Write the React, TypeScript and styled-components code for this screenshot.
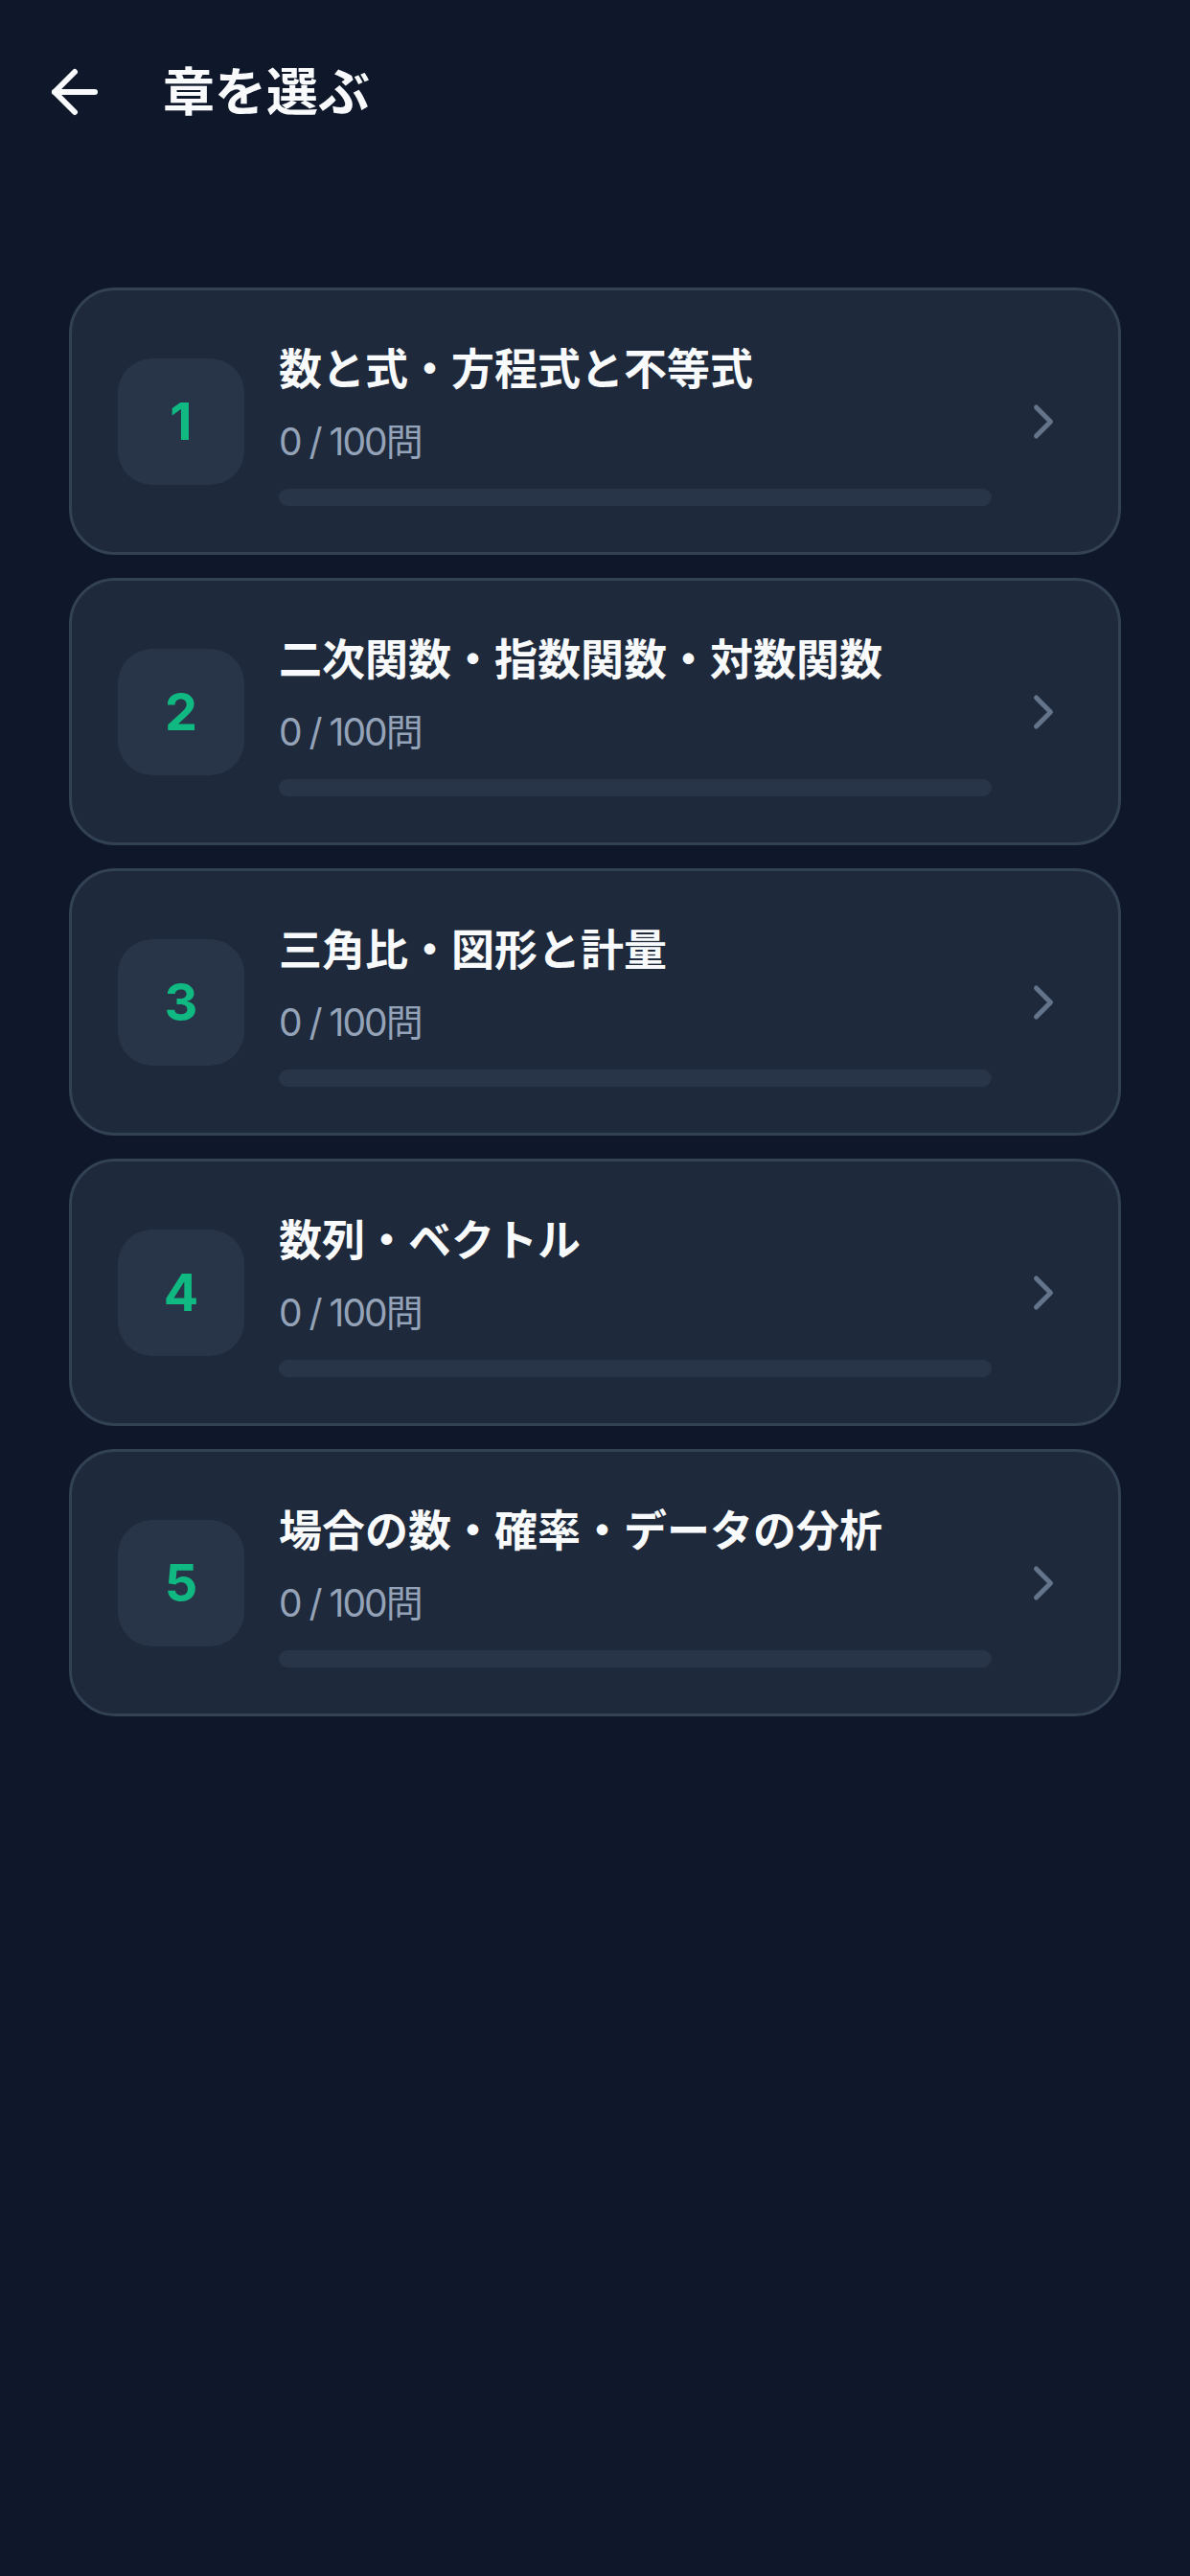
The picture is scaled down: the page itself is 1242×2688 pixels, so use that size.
import React from "react";
import styled, { createGlobalStyle } from "styled-components";
import { ArrowLeft, ChevronRight } from "lucide-react";

const GlobalStyle = createGlobalStyle`
  html, body {
    margin: 0;
    padding: 0;
    background: #0f172a;
  }
  body {
    font-family: "Inter", "Noto Sans CJK JP", sans-serif;
    -webkit-font-smoothing: antialiased;
  }
  * { box-sizing: border-box; }
`;

const Page = styled.div`
  min-height: 2688px;
  background: #0f172a;
  color: #f8fafc;
`;

const Header = styled.header`
  height: 192px;
  display: flex;
  align-items: center;
  gap: 56px;
  padding: 0 42px;
`;

const BackButton = styled.button`
  width: 72px;
  height: 72px;
  padding: 0;
  border: none;
  background: transparent;
  color: #f8fafc;
  display: flex;
  align-items: center;
  justify-content: center;
  cursor: pointer;
`;

const Title = styled.h1`
  margin: -6px 0 0;
  font-family: "Noto Sans CJK JP", sans-serif;
  font-size: 54px;
  font-weight: 700;
  line-height: 1.3;
  color: #f8fafc;
`;

const List = styled.div`
  display: flex;
  flex-direction: column;
  gap: 24px;
  padding: 108px 72px 0;
`;

const Card = styled.div`
  display: flex;
  align-items: center;
  gap: 24px;
  padding: 48px;
  background: #1e293b;
  border: 3px solid #334155;
  border-radius: 48px;
`;

const Main = styled.div`
  flex: 1;
  display: flex;
  align-items: center;
  gap: 36px;
  min-width: 0;
`;

const Badge = styled.div`
  width: 132px;
  height: 132px;
  flex-shrink: 0;
  border-radius: 36px;
  background: #283548;
  display: flex;
  align-items: center;
  justify-content: center;
  font-family: "Inter", sans-serif;
  font-size: 54px;
  font-weight: 700;
  color: #10b981;
`;

const Info = styled.div`
  flex: 1;
  display: flex;
  flex-direction: column;
  min-width: 0;
`;

const ChapterName = styled.div`
  font-family: "Noto Sans CJK JP", sans-serif;
  font-size: 45px;
  font-weight: 700;
  line-height: 63px;
  color: #f8fafc;
  white-space: nowrap;
`;

const Count = styled.div`
  margin-top: 18px;
  font-family: "Inter", "Noto Sans CJK JP", sans-serif;
  font-size: 39px;
  font-weight: 400;
  line-height: 58px;
  letter-spacing: -2px;
  color: #94a3b8;
`;

const Track = styled.div`
  margin-top: 20px;
  height: 18px;
  border-radius: 9px;
  background: #283548;
  overflow: hidden;
`;

const Fill = styled.div`
  height: 100%;
  background: #10b981;
  border-radius: 9px;
`;

const Chevron = styled.div`
  width: 60px;
  height: 60px;
  flex-shrink: 0;
  color: #64748b;
  display: flex;
  align-items: center;
  justify-content: center;
`;

const chapters = [
  { no: 1, name: "数と式・方程式と不等式", done: 0, total: 100 },
  { no: 2, name: "二次関数・指数関数・対数関数", done: 0, total: 100 },
  { no: 3, name: "三角比・図形と計量", done: 0, total: 100 },
  { no: 4, name: "数列・ベクトル", done: 0, total: 100 },
  { no: 5, name: "場合の数・確率・データの分析", done: 0, total: 100 },
];

export default function App() {
  return (
    <Page>
      <GlobalStyle />
      <Header>
        <BackButton aria-label="戻る">
          <ArrowLeft size={72} strokeWidth={2} />
        </BackButton>
        <Title>章を選ぶ</Title>
      </Header>
      <List>
        {chapters.map((c) => (
          <Card key={c.no}>
            <Main>
              <Badge>{c.no}</Badge>
              <Info>
                <ChapterName>{c.name}</ChapterName>
                <Count>
                  {c.done} / {c.total}問
                </Count>
                <Track>
                  <Fill style={{ width: `${(c.done / c.total) * 100}%` }} />
                </Track>
              </Info>
            </Main>
            <Chevron>
              <ChevronRight size={60} strokeWidth={2} />
            </Chevron>
          </Card>
        ))}
      </List>
    </Page>
  );
}
